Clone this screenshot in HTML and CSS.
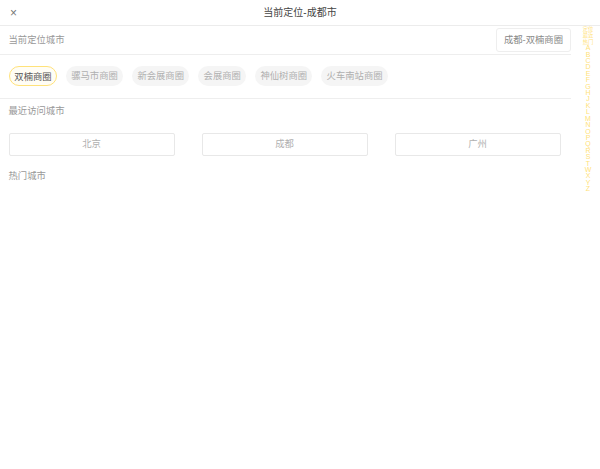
FILE: index.html
```html
<!DOCTYPE html>
<html lang="zh-CN">
<head>
    <meta charset="UTF-8">
    <meta name="viewport" content="width=device-width, initial-scale=1.0">
    <title>当前定位-成都市</title>
    <link rel="stylesheet" href="styles.css">
</head>
<body>
    <div class="header">
        <span class="close">×</span>
        <span class="headerTitle">当前定位-成都市</span>
    </div>
    <div class="content">
        <div class="locateRow">
            <span class="sectionTitle">当前定位城市</span>
            <span class="locateBtn">成都-双楠商圈</span>
        </div>
        <div class="chips">
            <span class="chip active">双楠商圈</span>
            <span class="chip">骡马市商圈</span>
            <span class="chip">新会展商圈</span>
            <span class="chip">会展商圈</span>
            <span class="chip">神仙树商圈</span>
            <span class="chip">火车南站商圈</span>
        </div>
        <div class="sectionTitle recentTitle">最近访问城市</div>
        <div class="cities">
            <span class="city">北京</span>
            <span class="city">成都</span>
            <span class="city">广州</span>
        </div>
        <div class="sectionTitle hotTitle">热门城市</div>
    </div>
    <!-- 右侧字母索引 -->
    <ul class="letters">
        <li class="cn">定位</li>
        <li class="cn">最近</li>
        <li class="cn">热门</li>
        <li>A</li><li>B</li><li>C</li><li>D</li><li>E</li><li>F</li><li>G</li>
        <li>H</li><li>J</li><li>K</li><li>L</li><li>M</li><li>N</li><li>O</li>
        <li>P</li><li>Q</li><li>R</li><li>S</li><li>T</li><li>W</li><li>X</li>
        <li>Y</li><li>Z</li>
    </ul>
</body>
</html>
```

FILE: styles.css
```css
* {
    box-sizing: border-box;
}

body {
    margin: 0;
    background-color: #fff;
    font-family: "Liberation Sans", "Noto Sans CJK SC", sans-serif;
    color: #999;
}

.header {
    display: flex;
    justify-content: center;
    align-items: center;
    position: relative;
    height: 26px;
    padding-bottom: 3px;
    border-bottom: 1px solid #ececec;
    font-size: 10px;
    color: #444;
}

.close {
    position: absolute;
    left: 10px;
    top: 6px;
    font-size: 12px;
    color: #777;
}

.content {
    width: 571px;
}

.locateRow {
    display: flex;
    justify-content: space-between;
    align-items: center;
    height: 29px;
    padding-left: 8.5px;
    border-bottom: 1px solid #eee;
}

.sectionTitle {
    font-size: 9.33px;
    color: #999;
}

.locateRow .sectionTitle {
    padding-bottom: 3px;
}

.locateBtn {
    display: flex;
    align-items: center;
    justify-content: center;
    width: 75px;
    height: 24px;
    margin-top: -1px;
    padding-bottom: 1px;
    border: 1px solid #eee;
    border-radius: 3px;
    font-size: 9.33px;
    color: #888;
}

.chips {
    display: flex;
    align-items: flex-start;
    gap: 8.9px;
    height: 44px;
    padding: 11px 0 0 9px;
    border-bottom: 1px solid #eee;
}

.chip {
    display: flex;
    align-items: center;
    height: 20px;
    padding: 0 5.33px 2px;
    border-radius: 10px;
    background-color: #f5f5f5;
    font-size: 9.33px;
    color: #b0b0b0;
}

.chip.active {
    border: 1px solid #ffe27a;
    padding: 0 4.33px 1px;
    background-color: #fffdf5;
    color: #555;
}

.recentTitle {
    padding: 5px 0 0 8.5px;
    line-height: 14px;
}

.cities {
    display: flex;
    gap: 27px;
    padding: 15px 0 0 9px;
}

.city {
    display: flex;
    align-items: center;
    justify-content: center;
    width: 166px;
    height: 23px;
    padding: 0 1px 3px 0;
    border: 1px solid #e8e8e8;
    border-radius: 2px;
    font-size: 9.33px;
    color: #b0b0b0;
}

.hotTitle {
    padding: 13px 0 0 8.5px;
    line-height: 14px;
}

.letters {
    position: absolute;
    left: 582px;
    top: 26px;
    width: 12px;
    margin: 0;
    padding: 0;
    list-style: none;
    text-align: center;
    font-size: 7px;
    line-height: 6.4px;
    color: #ffe27a;
}

.letters .cn {
    font-size: 5.3px;
}
```
